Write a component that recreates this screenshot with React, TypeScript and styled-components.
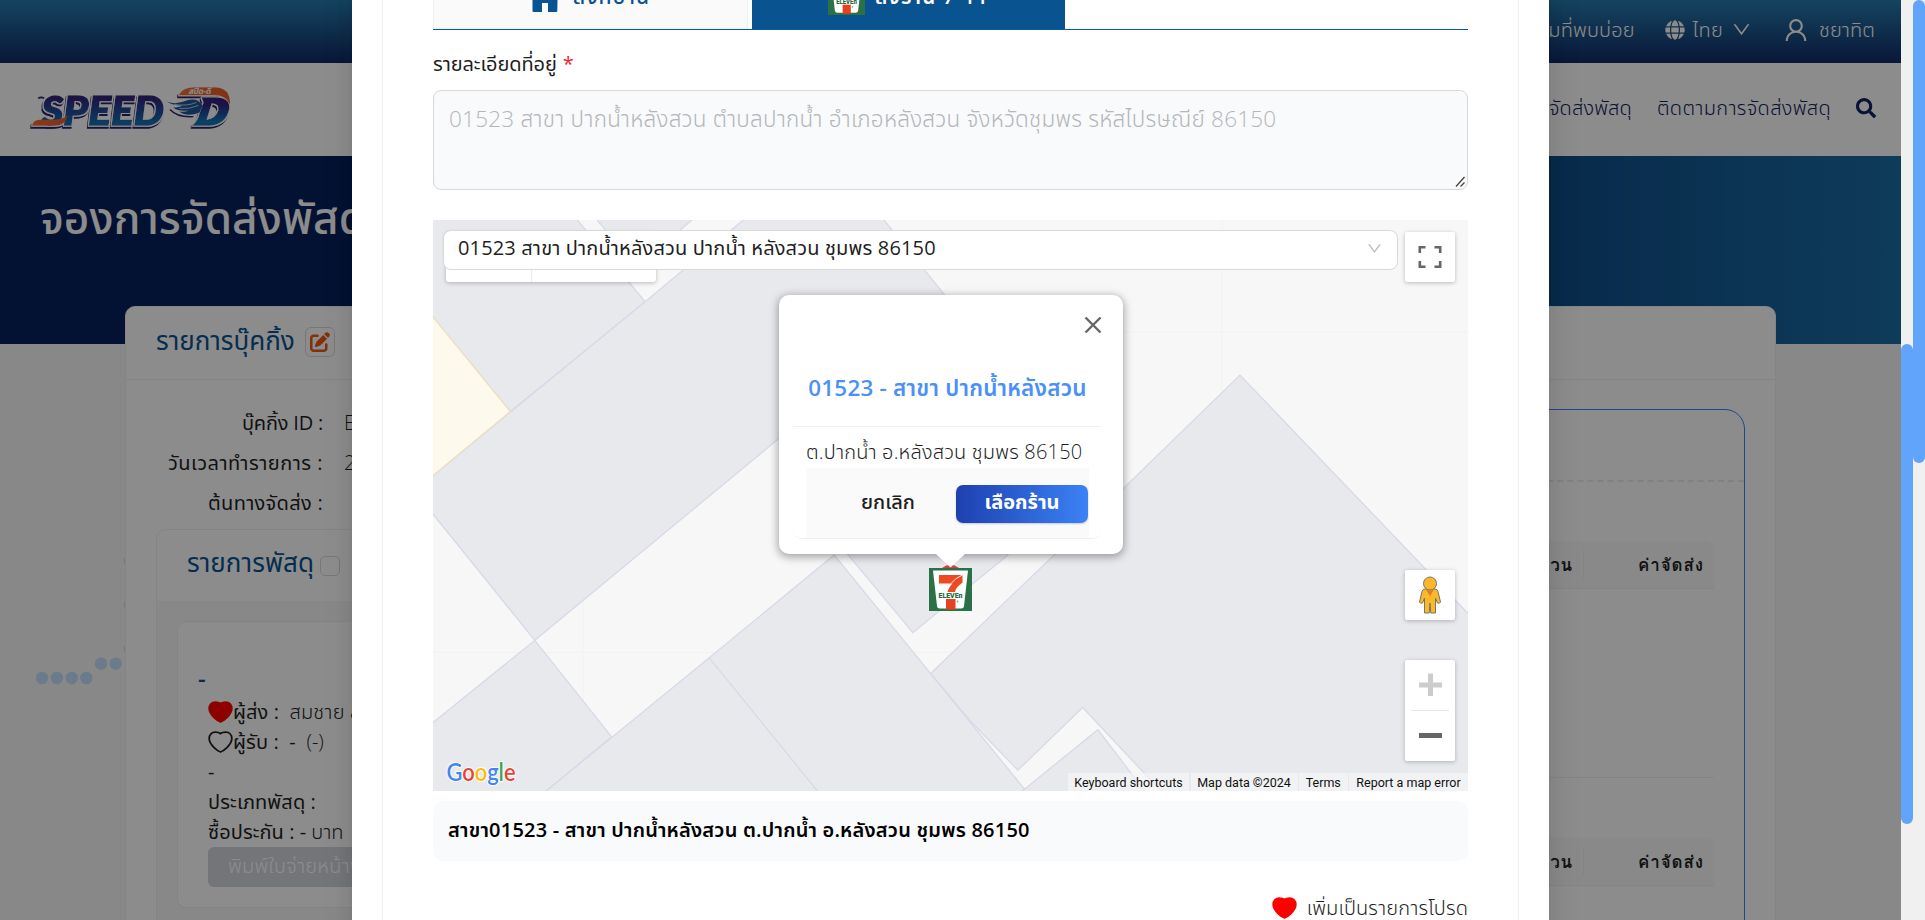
import React from "react";
import styled, { createGlobalStyle } from "styled-components";
import { FaGlobe, FaSearch } from "react-icons/fa";
import { FaPenToSquare } from "react-icons/fa6";
import { AiOutlineDown, AiOutlineUser } from "react-icons/ai";

const GlobalStyle = createGlobalStyle`
  * { box-sizing: border-box; }
  body {
    margin: 0;
    overflow: hidden;
    font-family: "Open Sans", "Noto Sans Thai", sans-serif;
    font-size: 20px;
    color: #1f1f1f;
    background: #f0f0f0;
  }
`;

const Text = styled.span<{ $size?: number; $weight?: number; $color?: string; $gap?: number; $lift?: number }>`
  display: inline-block;
  font-size: ${(p) => p.$size ?? 20}px;
  font-weight: ${(p) => p.$weight ?? 400};
  color: ${(p) => p.$color ?? "inherit"};
  letter-spacing: ${(p) => p.$gap ?? 0}px;
  padding-bottom: ${(p) => p.$lift ?? 0}px;
  line-height: 30px;
  white-space: nowrap;
`;

/* ---------- window ---------- */
const Window = styled.div`
  display: flex;
  width: 1925px;
  height: 920px;
  overflow: hidden;
`;
const Viewport = styled.div`
  position: relative;
  width: 1901px;
  height: 920px;
  overflow: hidden;
  background: #f7f7f7;
`;
const ScrollTrack = styled.div<{ $start: number }>`
  width: 12px;
  height: 920px;
  padding-top: ${(p) => p.$start}px;
  background: #f0f0f0;
`;
const ScrollThumb = styled.div<{ $length: number }>`
  height: ${(p) => p.$length}px;
  border-radius: 6px;
  background: #61a4fb;
`;

/* ---------- page ---------- */
const TopBar = styled.div`
  display: flex;
  align-items: center;
  justify-content: flex-end;
  height: 63px;
  padding: 0 26px 4px 0;
  color: #fff;
  background: linear-gradient(180deg, #267db0 0%, #122a66 100%);
`;
const TopItem = styled.div<{ $after?: number; $gap?: number }>`
  display: flex;
  align-items: center;
  gap: ${(p) => p.$gap ?? 0}px;
  margin-right: ${(p) => p.$after ?? 0}px;
`;
const Header = styled.header`
  display: flex;
  align-items: center;
  justify-content: space-between;
  height: 93px;
  padding: 0 25px 0 29px;
  background: #fff;
`;
const Nav = styled.nav`
  display: flex;
  align-items: center;
  gap: 25px;
  padding-bottom: 4px;
  color: #12235f;
`;
const Hero = styled.div`
  height: 188px;
  padding: 38px 40px;
  color: #fff;
  background: linear-gradient(90deg, #06205e 0%, #06205e 40%, #0e4a86 80%, #1b6da6 100%);
`;
const HeroTitle = styled.h1`
  margin: 0;
  font-size: 44px;
  font-weight: 500;
  line-height: 46px;
  letter-spacing: 0.1px;
`;
const BookingCard = styled.section`
  position: relative;
  height: 700px;
  margin: -38px 125px 0;
  border: 1px solid #f0f0f0;
  border-radius: 10px;
  background: #fff;
`;
const CardHead = styled.div`
  display: flex;
  align-items: center;
  gap: 10px;
  height: 73px;
  padding: 0 0 3px 30px;
  border-bottom: 1px solid #f0f0f0;
`;
const EditButton = styled.div`
  display: grid;
  place-items: center;
  width: 30px;
  height: 30px;
  border: 1px solid #d9d9d9;
  border-radius: 6px;
  color: #e8590f;
`;
const CardBody = styled.div`
  display: flex;
  justify-content: space-between;
  padding: 0 30px;
`;
const Details = styled.div`
  width: 620px;
  padding-top: 23px;
`;
const DetailRow = styled.div`
  display: grid;
  grid-template-columns: 167px 1fr;
  column-gap: 21px;
  align-items: center;
  height: 40px;
`;
const Label = styled.div`
  display: flex;
  justify-content: flex-end;
`;
const ParcelBox = styled.div`
  height: 500px;
  margin-top: 6px;
  border: 1px solid #f0f0f0;
  border-radius: 10px;
  background: #f7f7f7;
  overflow: hidden;
`;
const ParcelHead = styled.div`
  display: flex;
  align-items: center;
  gap: 6px;
  height: 71px;
  padding: 0 0 7px 30px;
  background: #fff;
`;
const Checkbox = styled.span`
  width: 20px;
  height: 20px;
  margin-top: 8px;
  border: 1px solid #d9d9d9;
  border-radius: 5px;
`;
const ParcelCard = styled.div`
  height: 287px;
  margin: 20px 20px;
  padding: 41px 20px 0 30px;
  border: 1px solid #f0f0f0;
  border-radius: 9px;
  background: #fff;
`;
const ParcelLine = styled.div<{ $title?: boolean; $gap?: number }>`
  display: flex;
  align-items: center;
  gap: ${(p) => p.$gap ?? 0}px;
  height: 30px;
  margin-left: ${(p) => (p.$title ? -10 : 0)}px;
  margin-bottom: ${(p) => (p.$title ? 4 : 0)}px;
`;
const PrintButton = styled.div`
  display: flex;
  align-items: center;
  height: 40px;
  padding: 0 0 3px 20px;
  border-radius: 6px;
  background: #d3d5dc;
`;
const Summary = styled.div`
  width: 560px;
  height: 700px;
  margin-top: 29px;
  border: 1px solid #3b82f6;
  border-radius: 20px;
`;
const SummaryHead = styled.div`
  height: 72px;
  border-bottom: 2px dashed #ececec;
`;
const FeeTable = styled.div<{ $top: number }>`
  height: 296px;
  margin: 0 30px;
  padding-top: ${(p) => p.$top}px;
  border-bottom: 1px solid #f0f0f0;
`;
const FeeHead = styled.div`
  display: flex;
  align-items: center;
  justify-content: flex-end;
  height: 48px;
  padding-right: 10px;
  border-bottom: 1px solid #f0f0f0;
  border-radius: 8px 8px 0 0;
  background: #fafafa;
  font-family: Loma, "Noto Sans", sans-serif;
`;
const FeeDivider = styled.span`
  width: 1px;
  height: 28px;
  margin: 0 54px 0 10px;
  background: #f0f0f0;
`;
const Dots = styled.svg`
  position: absolute;
  left: 36px;
  top: 552px;
`;

/* ---------- modal ---------- */
const Mask = styled.div`
  position: absolute;
  inset: 0;
  display: flex;
  justify-content: center;
  background: rgba(0, 0, 0, 0.45);
`;
const Modal = styled.div`
  width: 1197px;
  height: 1100px;
  margin-top: -60px;
  padding: 0 30px;
  background: #fff;
  box-shadow: 0 6px 16px rgba(0, 0, 0, 0.08), 0 3px 6px -4px rgba(0, 0, 0, 0.12), 0 9px 28px 8px rgba(0, 0, 0, 0.05);
`;
const ModalCard = styled.div`
  display: flex;
  flex-direction: column;
  height: 1100px;
  padding: 28px 50px 0;
  border: 1px solid #f0f0f0;
`;
const Tabs = styled.div`
  display: flex;
  gap: 4px;
  height: 61px;
  border-bottom: 1px solid #0a5aa0;
`;
const Tab = styled.div<{ $active?: boolean }>`
  display: flex;
  align-items: center;
  justify-content: center;
  gap: ${(p) => (p.$active ? 10 : 14)}px;
  width: ${(p) => (p.$active ? 313 : 315)}px;
  height: 60px;
  padding-bottom: ${(p) => (p.$active ? 5 : 2)}px;
  border: 1px solid ${(p) => (p.$active ? "#0a5391" : "#f0f0f0")};
  color: ${(p) => (p.$active ? "#fff" : "#0a5391")};
  background: ${(p) => (p.$active ? "#0a5391" : "#fafafa")};
`;
const FieldLabel = styled.div`
  display: flex;
  align-items: center;
  gap: 6px;
  height: 60px;
  padding-top: 7px;
`;
const AddressBox = styled.div`
  display: flex;
  align-items: flex-start;
  justify-content: space-between;
  height: 100px;
  padding: 13px 1px 1px 15px;
  border: 1px solid #d9d9d9;
  border-radius: 8px;
  background: #f9fafc;
`;
const Grip = styled.svg`
  align-self: flex-end;
`;
const MapFrame = styled.div`
  position: relative;
  height: 571px;
  margin-top: 30px;
  overflow: hidden;
`;
const MapCanvas = styled.svg`
  display: block;
  width: 100%;
  height: 100%;
`;
const StoreSelect = styled.div`
  position: absolute;
  left: 10px;
  top: 10px;
  display: flex;
  align-items: center;
  justify-content: space-between;
  width: 955px;
  height: 40px;
  padding: 0 14px 4px 14px;
  border: 1px solid #d9d9d9;
  border-radius: 8px;
  background: #fff;
  color: #bfbfbf;
`;
const MapType = styled.div`
  position: absolute;
  left: 13px;
  top: 12px;
  display: grid;
  grid-template-columns: 86px 124px;
  width: 210px;
  height: 49.5px;
  border-radius: 3px;
  background: #fff;
  box-shadow: 0 1px 4px rgba(0, 0, 0, 0.25);
`;
const MapTypeCell = styled.span<{ $divided?: boolean }>`
  border-right: ${(p) => (p.$divided ? "1px solid #ebebeb" : "0")};
`;
const MapControl = styled.div<{ $top: number; $tall?: boolean }>`
  position: absolute;
  right: 13px;
  top: ${(p) => p.$top}px;
  display: flex;
  flex-direction: column;
  align-items: center;
  justify-content: center;
  width: 50px;
  height: ${(p) => (p.$tall ? 101 : 50)}px;
  border-radius: 2px;
  background: #fff;
  box-shadow: 0 1px 4px rgba(0, 0, 0, 0.25);
`;
const GoogleMark = styled.svg`
  position: absolute;
  left: 6px;
  bottom: 0;
`;
const Legal = styled.div`
  position: absolute;
  right: 0;
  bottom: 0;
  display: flex;
  gap: 1.5px;
`;
const LegalItem = styled.span<{ $width: number }>`
  display: flex;
  justify-content: center;
  width: ${(p) => p.$width}px;
  height: 18px;
  background: rgba(245, 245, 245, 0.7);
  color: #111;
  font-family: Roboto, sans-serif;
  font-size: 12.5px;
  line-height: 19px;
  white-space: nowrap;
`;
const Popup = styled.div`
  position: absolute;
  left: 346px;
  top: 75px;
  display: flex;
  flex-direction: column;
  width: 344px;
  height: 259px;
  padding: 21px 21px 16px 14px;
  border-radius: 10px;
  background: #fff;
  box-shadow: 0 2px 9px 1px rgba(0, 0, 0, 0.35);
`;
const CloseIcon = styled.svg`
  align-self: flex-end;
  flex: none;
`;
const PopupCard = styled.div`
  height: 184px;
  margin: 21px 1px 0 0;
  border-bottom: 1px solid #f0f0f0;
  border-radius: 9px;
`;
const PopupTitle = styled.div`
  display: flex;
  align-items: center;
  justify-content: center;
  height: 72px;
  padding: 0 0 6px 1px;
  border-bottom: 1px solid #f0f0f0;
`;
const PopupBody = styled.div`
  padding: 10px 12px 0 13px;
`;
const PopupActions = styled.div`
  display: flex;
  align-items: center;
  justify-content: flex-end;
  gap: 41px;
  height: 70px;
  margin-top: 1px;
  padding-right: 1px;
  background: #fafafa;
`;
const ChooseButton = styled.div`
  display: flex;
  align-items: center;
  justify-content: center;
  width: 132px;
  height: 38px;
  margin-top: 2px;
  padding-bottom: 4px;
  border-radius: 7px;
  color: #fff;
  background: linear-gradient(90deg, #1e40af, #3b82f6);
  box-shadow: 0 1px 2px rgba(0, 0, 0, 0.2);
`;
const Marker = styled.div`
  position: absolute;
  left: 496px;
  top: 334px;
`;
const Chosen = styled.div`
  display: flex;
  align-items: center;
  height: 60px;
  margin-top: 10px;
  padding: 0 15px 3px;
  border-radius: 10px;
  background: #f9fafc;
  color: #000;
`;
const Favourite = styled.div`
  display: flex;
  align-items: center;
  justify-content: flex-end;
  gap: 10px;
  margin-top: 32px;
`;

/* ---------- drawings ---------- */
const Heart = ({ filled = false }: { filled?: boolean }) => (
  <svg width="25" height="22" viewBox="0 0 25 22">
    <path
      d="M12.5 21 C10.5 20.4 1.2 14.2 1.2 7.6 C1.2 3.8 3.8 1.2 7.2 1.2 C9.5 1.2 11.5 1.7 12.5 2.7 C13.5 1.7 15.5 1.2 17.8 1.2 C21.2 1.2 23.8 3.8 23.8 7.6 C23.8 14.2 14.5 20.4 12.5 21 Z"
      fill={filled ? "#ff0000" : "none"}
      stroke={filled ? "#ff0000" : "#1f1f1f"}
      strokeWidth="1.8"
      strokeLinejoin="round"
    />
  </svg>
);

const House = () => (
  <svg width="28" height="27" viewBox="0 0 28 27">
    <path d="M14 0 L28 12.5 L26.5 14.5 L26.3 26 Q26.3 27 25.3 27 H17 V18 H11 V27 H2.5 Q1.5 27 1.5 26 V14.5 L0 12.5 Z" fill="#0a5391" />
  </svg>
);

const SevenEleven = ({ size }: { size: number }) => (
  <svg width={size} height={size} viewBox="0 0 43 43">
    <rect width="43" height="43" fill="#2b7148" />
    <path d="M4 2.5 H39 L35 38 Q34.8 40.5 32 40.5 H11 Q8.2 40.5 8 38 Z" fill="#fff" />
    <path d="M10 7 H33.5 V14.5 C29 18 26.5 20.5 26 24 H18.5 C19.5 20.5 21 18 23.5 15.5 H10 Z" fill="#ee4a22" />
    <path d="M22 15.5 Q26 10 33.5 7" stroke="#fff" strokeWidth="0.9" fill="none" />
    <rect x="17" y="31" width="9.5" height="10.5" fill="#e8411f" />
    <text x="9.5" y="30.4" fontFamily="Roboto" fontWeight="900" fontSize="7.6" fill="#1f6b40" textLength="24" lengthAdjust="spacingAndGlyphs">
      ELEVEn
    </text>
    <circle cx="28.5" cy="33.5" r="1" fill="#7fb094" />
  </svg>
);

const Logo = () => (
  <svg width="205" height="49" viewBox="0 0 202 48">
    <defs>
      <linearGradient id="ink" x1="0" y1="0" x2="0" y2="1">
        <stop offset="0.25" stopColor="#32217e" />
        <stop offset="0.85" stopColor="#0f77b4" />
      </linearGradient>
      <linearGradient id="flame" x1="0" y1="0" x2="1" y2="0">
        <stop offset="0" stopColor="#f4702b" />
        <stop offset="1" stopColor="#ee5a2a" />
      </linearGradient>
      <filter id="edge" x="-10%" y="-20%" width="120%" height="150%">
        <feMorphology in="SourceAlpha" operator="dilate" radius="1.3" result="fat" />
        <feFlood floodColor="#fff" />
        <feComposite in2="fat" operator="in" result="white" />
        <feOffset in="fat" dx="-0.5" dy="2.2" result="low" />
        <feFlood floodColor="#2b2370" />
        <feComposite in2="low" operator="in" result="shade" />
        <feMerge>
          <feMergeNode in="shade" />
          <feMergeNode in="white" />
          <feMergeNode in="SourceGraphic" />
        </feMerge>
      </filter>
    </defs>
    <path d="M9 13 Q12 11 15 13 M13 24 Q14 29 20 29" fill="none" stroke="#2b2370" strokeWidth="1.6" />
    <g filter="url(#edge)">
      <text x="12" y="39" fontFamily="Lato, sans-serif" fontWeight="900" fontStyle="italic" fontSize="39" textLength="121" lengthAdjust="spacingAndGlyphs" fill="url(#ink)" stroke="url(#ink)" strokeWidth="1.4">
        SPEED
      </text>
      <path d="M3 40 Q4 34 10 34 H26 Q32 34 38 30 Q36 40 26 40 Z" fill="url(#flame)" />
    </g>
    <g filter="url(#edge)">
      <path d="M148 9 Q152 2 163 2 H184 Q199 3 198 19 Q194 10 183 10 H148 Z" fill="url(#flame)" />
      <path d="M170 12 H183 Q198 12 197.5 23 Q194 39 178 40 H161 Q167 34 168 28 L172 17 Z M180 18 L175 34 Q184 33 186.5 25 Q188 18 180 18 Z" fill="url(#ink)" fillRule="evenodd" />
    </g>
    <path d="M136 16 Q144 20 156 15 Q166 12 171 20 L168 27 Q156 32 148 26 Q154 27 157 25 Q147 26 142 22 Q148 22 151 20 Q141 20 136 16 Z" fill="#20579c" />
    <path d="M143 19 Q156 21 165 17 M148 23 Q158 24 167 20" stroke="#b9d5ea" strokeWidth="0.9" fill="none" />
    <path d="M139 24 Q146 32 162 31" stroke="#2b2370" strokeWidth="1.4" fill="none" />
    <text x="157" y="9" fontFamily="Noto Sans Thai, sans-serif" fontWeight="700" fontStyle="italic" fontSize="8" textLength="22" fill="#fff">
      สปีด-ดี
    </text>
  </svg>
);

const Pegman = () => (
  <svg width="24" height="38" viewBox="0 0 24 38">
    <g fill="#fbb92a" stroke="#7a7466" strokeWidth="1">
      <path d="M7 13 H17 Q19.5 13 20 15.5 L22.5 26 Q21.5 28 19.5 27 L17.5 22 V37 H12.8 L12 27 L11.2 37 H6.5 V22 L4.5 27 Q2.5 28 1.5 26 L4 15.5 Q4.5 13 7 13 Z" />
      <circle cx="12" cy="7.5" r="6.5" />
    </g>
    <path d="M8 13.5 Q12 15.5 16 13.5 L12 20 Z" fill="#e37c26" />
  </svg>
);

const MapDrawing = () => (
  <MapCanvas viewBox="0 0 1566 1565" preserveAspectRatio="none">
    <rect width="1566" height="1565" fill="#f7f7f7" />
    <path d="M0 308 H1566 M0 1185 H1566 M1194 0 V1565 M227 0 V1565" stroke="#f1f1f1" strokeWidth="1.5" />
    <g fill="#e8e9ed" stroke="#d8d9e7" strokeWidth="1.3">
      {[
        "-5,-5 216,-5 321,224 117,525 -5,255",
        "246,-5 395,-5 308,129",
        "473,-5 680,-5 779,216 154,1152 -5,795 -5,708 321,224",
        "154,1152 270,1416 168,1570 -5,1570 -5,1385",
        "607,918 895,1560 888,1570 168,1570 418,1200",
        "627,915 726,1131 870,918 800,800 600,800",
        "753,1243 813,1373 885,1508 983,1336 1104,1570 1570,1570 1570,1086 1221,425 1045,735",
        "895,1560 1006,1397 1079,1570 890,1570",
      ].map((points) => (
        <polygon key={points} points={points} vectorEffect="non-scaling-stroke" />
      ))}
      <polygon points="-5,255 117,525 -5,708" fill="#fdf9ec" stroke="#ecdfc2" vectorEffect="non-scaling-stroke" />
      <path d="M418 1200 L584 1570" fill="none" vectorEffect="non-scaling-stroke" />
    </g>
  </MapCanvas>
);

const FeeHeader = () => (
  <FeeHead>
    <Text $size={17} $weight={700} $gap={0.8}>จำนวน</Text>
    <FeeDivider />
    <Text $size={17} $weight={700} $gap={0.9}>ค่าจัดส่ง</Text>
  </FeeHead>
);

const Page = () => (
  <>
    <TopBar>
      <TopItem $after={30}>
        <Text $weight={300} $gap={0.16}>คำถามที่พบบ่อย</Text>
      </TopItem>
      <TopItem $after={30} $gap={8}>
        <FaGlobe size={20} />
        <Text $weight={300} $gap={0.3}>ไทย</Text>
        <AiOutlineDown size={21} />
      </TopItem>
      <TopItem $gap={9}>
        <AiOutlineUser size={28} />
        <Text $weight={300} $gap={0.1}>ชยาทิต</Text>
      </TopItem>
    </TopBar>
    <Header>
      <Logo />
      <Nav>
        <Text $weight={300} $gap={0.15}>จองการจัดส่งพัสดุ</Text>
        <Text $weight={300} $gap={0.32}>ติดตามการจัดส่งพัสดุ</Text>
        <FaSearch size={20} />
      </Nav>
    </Header>
    <Hero>
      <HeroTitle>จองการจัดส่งพัสดุ</HeroTitle>
    </Hero>
    <Dots width="100" height="140" viewBox="0 0 100 140">
      <g fill="#c3e0fd">
        {[[6, 126], [21, 126], [35.7, 126], [50.3, 126], [65, 111.7], [79.7, 111.7], [94, 97], [94, 53], [94, 9]].map(([x, y]) => (
          <circle key={`${x}-${y}`} cx={x} cy={y} r="6.2" />
        ))}
      </g>
    </Dots>
    <BookingCard>
      <CardHead>
        <Text $size={26} $color="#0a5391" $lift={4}>รายการบุ๊คกิ้ง</Text>
        <EditButton>
          <FaPenToSquare size={20} />
        </EditButton>
      </CardHead>
      <CardBody>
        <Details>
          <DetailRow>
            <Label><Text $gap={-0.2}>บุ๊คกิ้ง ID :</Text></Label>
            <Text $weight={300}>E</Text>
          </DetailRow>
          <DetailRow>
            <Label><Text $gap={0.5}>วันเวลาทำรายการ :</Text></Label>
            <Text $weight={300}>2</Text>
          </DetailRow>
          <DetailRow>
            <Label><Text $gap={0.3}>ต้นทางจัดส่ง :</Text></Label>
          </DetailRow>
          <ParcelBox>
            <ParcelHead>
              <Text $size={26} $color="#0a5391" $gap={0.06}>รายการพัสดุ</Text>
              <Checkbox />
            </ParcelHead>
            <ParcelCard>
              <ParcelLine $title>
                <Text $size={24} $weight={600} $color="#0a5391">-</Text>
              </ParcelLine>
              <ParcelLine>
                <Heart filled />
                <Text $gap={0.08}>ผู้ส่ง :&nbsp;&nbsp;</Text>
                <Text $weight={300} $gap={0.15}>สมชาย ส</Text>
              </ParcelLine>
              <ParcelLine>
                <Heart />
                <Text $gap={0.1}>ผู้รับ :&nbsp;&nbsp;-&nbsp;&nbsp;</Text>
                <Text $weight={300}>(-)</Text>
              </ParcelLine>
              <ParcelLine><Text>-</Text></ParcelLine>
              <ParcelLine><Text $gap={0.1}>ประเภทพัสดุ :</Text></ParcelLine>
              <ParcelLine $gap={5}>
                <Text $gap={0.06}>ซื้อประกัน : -</Text>
                <Text $weight={300}>บาท</Text>
              </ParcelLine>
              <PrintButton>
                <Text $weight={300} $gap={0.23} $color="#fff">พิมพ์ใบจ่ายหน้าพัสดุ</Text>
              </PrintButton>
            </ParcelCard>
          </ParcelBox>
        </Details>
        <Summary>
          <SummaryHead />
          <FeeTable $top={59}><FeeHeader /></FeeTable>
          <FeeTable $top={60}><FeeHeader /></FeeTable>
        </Summary>
      </CardBody>
    </BookingCard>
  </>
);

const StoreMap = () => (
  <MapFrame>
    <MapDrawing />
    <MapType>
      <MapTypeCell $divided />
      <MapTypeCell />
    </MapType>
    <StoreSelect>
      <Text $gap={0.15} $color="#1f1f1f">01523 สาขา ปากน้ำหลังสวน ปากน้ำ หลังสวน ชุมพร 86150</Text>
      <AiOutlineDown size={17} />
    </StoreSelect>
    <MapControl $top={12}>
      <svg width="24" height="24" viewBox="0 0 24 24" fill="none" stroke="#666" strokeWidth="2.6">
        <path d="M1.8 8 V2.3 H7.5 M16.5 2.3 H22.2 V8 M22.2 16 V21.7 H16.5 M7.5 21.7 H1.8 V16" />
      </svg>
    </MapControl>
    <MapControl $top={350}>
      <Pegman />
    </MapControl>
    <MapControl $top={440} $tall>
      <svg width="40" height="101" viewBox="0 0 40 101">
        <path d="M9 25 H32 M20.5 13.5 V36" stroke="#ccc" strokeWidth="5" />
        <path d="M1 50.5 H39" stroke="#e6e6e6" />
        <path d="M9 75.5 H32" stroke="#666" strokeWidth="5" />
      </svg>
    </MapControl>
    <Popup>
      <CloseIcon width="18" height="18" viewBox="0 0 18 18">
        <path d="M1.5 1.5 L16.5 16.5 M16.5 1.5 L1.5 16.5" stroke="#666" strokeWidth="2.4" />
      </CloseIcon>
      <PopupCard>
        <PopupTitle>
          <Text $size={22.4} $weight={600} $gap={0.25} $color="#4a90f8">01523 - สาขา ปากน้ำหลังสวน</Text>
        </PopupTitle>
        <PopupBody>
          <Text $weight={300} $gap={0.18}>ต.ปากน้ำ อ.หลังสวน ชุมพร 86150</Text>
          <PopupActions>
            <Text $weight={500} $lift={2}>ยกเลิก</Text>
            <ChooseButton>
              <Text $weight={700}>เลือกร้าน</Text>
            </ChooseButton>
          </PopupActions>
        </PopupBody>
      </PopupCard>
    </Popup>
    <Marker>
      <svg width="43" height="14" viewBox="0 0 43 14" display="block">
        <path d="M13 14 Q21.5 7 30 14 Z" fill="#d9403a" />
        <path d="M7 0 H36 L21.5 13.5 Z" fill="#fff" />
      </svg>
      <SevenEleven size={43} />
    </Marker>
    <GoogleMark width="90" height="34" viewBox="0 0 90 34">
      <text x="7.5" y="24" fontFamily="Lato, sans-serif" fontSize="24" fontWeight="600" textLength="69" lengthAdjust="spacingAndGlyphs" stroke="#fff" strokeWidth="2" paintOrder="stroke">
        <tspan fill="#4285f4">G</tspan><tspan fill="#ea4335">o</tspan><tspan fill="#fbbc04">o</tspan><tspan fill="#4285f4">g</tspan><tspan fill="#34a853">l</tspan><tspan fill="#ea4335">e</tspan>
      </text>
    </GoogleMark>
    <Legal>
      <LegalItem $width={121}>Keyboard shortcuts</LegalItem>
      <LegalItem $width={107}>Map data ©2024</LegalItem>
      <LegalItem $width={48.5}>Terms</LegalItem>
      <LegalItem $width={119}>Report a map error</LegalItem>
    </Legal>
  </MapFrame>
);

export default function App() {
  return (
    <Window>
      <GlobalStyle />
      <Viewport>
        <Page />
        <Mask>
          <Modal>
            <ModalCard>
              <Tabs>
                <Tab>
                  <House />
                  <Text $size={21} $weight={500} $gap={0.9} $lift={4}>ส่งที่บ้าน</Text>
                </Tab>
                <Tab $active>
                  <SevenEleven size={37} />
                  <Text $size={20.5} $weight={600} $gap={1.1} $lift={2}>ส่งร้าน 7-11</Text>
                </Tab>
              </Tabs>
              <FieldLabel>
                <Text $gap={-0.1}>รายละเอียดที่อยู่</Text>
                <Text $color="#f5222d">*</Text>
              </FieldLabel>
              <AddressBox>
                <Text $size={22.5} $weight={300} $gap={0.22} $color="#b4b6b9">
                  01523 สาขา ปากน้ำหลังสวน ตำบลปากน้ำ อำเภอหลังสวน จังหวัดชุมพร รหัสไปรษณีย์ 86150
                </Text>
                <Grip width="11" height="12" viewBox="0 0 11 12">
                  <path d="M1 10.5 L9.5 1 M5.5 10.5 L9.5 6.5" stroke="#444" strokeWidth="1.3" />
                </Grip>
              </AddressBox>
              <StoreMap />
              <Chosen>
                <Text $weight={600} $gap={0.21}>สาขา01523 - สาขา ปากน้ำหลังสวน ต.ปากน้ำ อ.หลังสวน ชุมพร 86150</Text>
              </Chosen>
              <Favourite>
                <Heart filled />
                <Text $weight={300} $gap={0.12}>เพิ่มเป็นรายการโปรด</Text>
              </Favourite>
            </ModalCard>
          </Modal>
        </Mask>
      </Viewport>
      <ScrollTrack $start={344}>
        <ScrollThumb $length={480} />
      </ScrollTrack>
      <ScrollTrack $start={0}>
        <ScrollThumb $length={463} />
      </ScrollTrack>
    </Window>
  );
}
